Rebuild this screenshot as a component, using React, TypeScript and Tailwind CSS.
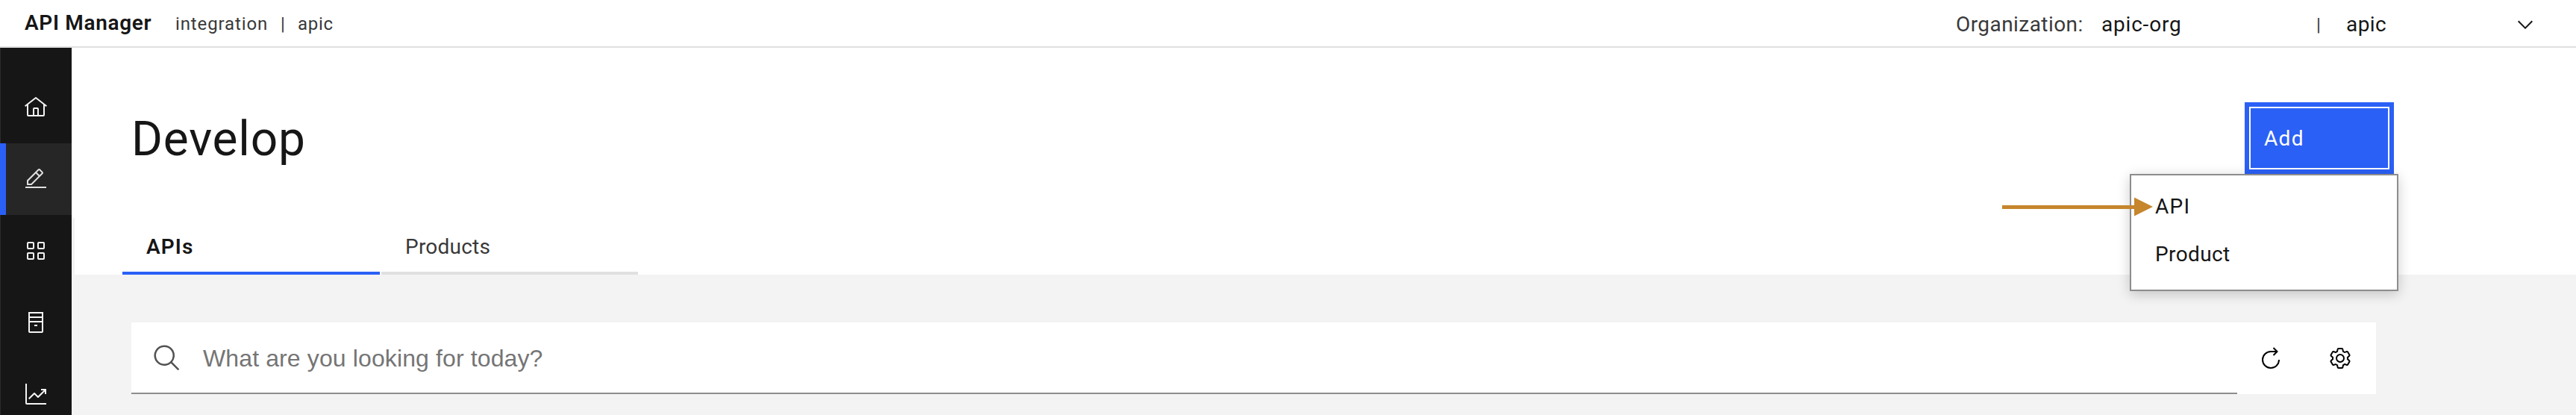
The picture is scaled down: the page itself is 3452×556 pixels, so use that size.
import React from "react";

type IconProps = { children: React.ReactNode; className?: string };

function Icon({ children, className = "size-8" }: IconProps) {
  return (
    <svg viewBox="0 0 32 32" fill="currentColor" className={`${className} shrink-0`} aria-hidden="true">
      {children}
    </svg>
  );
}

const HomeIcon = () => (
  <Icon>
    <path d="M16.612 2.214a1.01 1.01 0 0 0-1.243 0L1 13.419l1.243 1.572L4 13.621V26a2.004 2.004 0 0 0 2 2h20a2.004 2.004 0 0 0 2-2V13.63L29.757 15 31 13.428ZM18 26h-4v-8h4Zm2 0v-8a2.002 2.002 0 0 0-2-2h-4a2.002 2.002 0 0 0-2 2v8H6V12.062l10-7.79 10 7.8V26Z" />
  </Icon>
);

const EditIcon = () => (
  <Icon>
    <path d="M2 26h28v2H2zM25.4 9c.8-.8.8-2 0-2.800l-3.600-3.600c-.8-.8-2-.8-2.800 0l-15 15V24h6.400l15-15zM20.400 4 24 7.600l-3 3L17.400 7l3-3zM6 22v-3.600l10-10 3.600 3.600-10 10H6z" />
  </Icon>
);

const GridIcon = () => (
  <Icon>
    <path d="M12 4H6a2 2 0 0 0-2 2v6a2 2 0 0 0 2 2h6a2 2 0 0 0 2-2V6a2 2 0 0 0-2-2Zm0 8H6V6h6Z" />
    <path d="M26 4h-6a2 2 0 0 0-2 2v6a2 2 0 0 0 2 2h6a2 2 0 0 0 2-2V6a2 2 0 0 0-2-2Zm0 8h-6V6h6Z" />
    <path d="M12 18H6a2 2 0 0 0-2 2v6a2 2 0 0 0 2 2h6a2 2 0 0 0 2-2v-6a2 2 0 0 0-2-2Zm0 8H6v-6h6Z" />
    <path d="M26 18h-6a2 2 0 0 0-2 2v6a2 2 0 0 0 2 2h6a2 2 0 0 0 2-2v-6a2 2 0 0 0-2-2Zm0 8h-6v-6h6Z" />
  </Icon>
);

const CatalogIcon = () => (
  <Icon>
    <path d="M6 2v26a2 2 0 0 0 2 2h16a2 2 0 0 0 2-2V2Zm18 2v4H8V4Zm0 6v4H8v-4ZM8 28V16h16v12Z" />
    <path d="M14 19h4v2h-4z" />
  </Icon>
);

const AnalyticsIcon = () => (
  <Icon>
    <path d="M4 2H2v26a2 2 0 0 0 2 2h26v-2H4Z" />
    <path d="M30 9h-7v2h3.590L19 18.590l-4.290-4.300a1 1 0 0 0-1.420 0L6 21.590 7.410 23 14 16.410l4.290 4.300a1 1 0 0 0 1.420 0L28 12.410V16h2Z" />
  </Icon>
);

const SearchIcon = () => (
  <Icon className="size-10">
    <path d="m29 27.586-7.552-7.552a11.018 11.018 0 1 0-1.414 1.414L27.586 29ZM4 13a9 9 0 1 1 9 9 9.010 9.010 0 0 1-9-9Z" />
  </Icon>
);

const RestartIcon = () => (
  <Icon>
    <path d="M27 18A11 11 0 1 1 16 7h8M19.500 2l5 5-5 5" fill="none" stroke="currentColor" strokeWidth="2" />
  </Icon>
);

const SettingsIcon = () => (
  <Icon>
    <path d="M27 16.760v-1.530l1.920-1.680A2 2 0 0 0 29.300 11l-2.360-4a2 2 0 0 0-1.730-1 2 2 0 0 0-.640.100l-2.430.820a11.350 11.350 0 0 0-1.310-.750l-.510-2.520a2 2 0 0 0-2-1.610h-4.680a2 2 0 0 0-2 1.610l-.510 2.520a11.480 11.480 0 0 0-1.320.750l-2.380-.860A2 2 0 0 0 6.790 6a2 2 0 0 0-1.730 1L2.700 11a2 2 0 0 0 .410 2.510L5 15.240v1.530l-1.890 1.680A2 2 0 0 0 2.700 21l2.360 4a2 2 0 0 0 1.730 1 2 2 0 0 0 .640-.100l2.430-.820a11.350 11.350 0 0 0 1.310.750l.510 2.520a2 2 0 0 0 2 1.610h4.720a2 2 0 0 0 2-1.610l.510-2.520a11.480 11.480 0 0 0 1.320-.750l2.420.820a2 2 0 0 0 .640.100 2 2 0 0 0 1.730-1l2.280-4a2 2 0 0 0-.410-2.510ZM25.210 24l-3.430-1.160a8.860 8.860 0 0 1-2.710 1.570L18.360 28h-4.720l-.710-3.550a9.360 9.360 0 0 1-2.700-1.570L6.790 24l-2.360-4 2.720-2.400a8.900 8.900 0 0 1 0-3.130L4.430 12l2.360-4 3.430 1.160a8.860 8.860 0 0 1 2.710-1.570L13.640 4h4.720l.710 3.550a9.360 9.360 0 0 1 2.700 1.570L25.210 8l2.360 4-2.720 2.400a8.900 8.900 0 0 1 0 3.130L27.570 20Z" />
    <path d="M16 22a6 6 0 1 1 6-6 5.940 5.940 0 0 1-6 6Zm0-10a3.910 3.910 0 0 0-4 4 3.910 3.910 0 0 0 4 4 3.910 3.910 0 0 0 4-4 3.910 3.910 0 0 0-4-4Z" />
  </Icon>
);

const ChevronDownIcon = () => (
  <Icon>
    <path d="M16 22 6 12l1.400-1.400 8.600 8.600 8.600-8.600L26 12z" />
  </Icon>
);

function Header() {
  return (
    <header className="flex h-16 items-center border-b-2 border-[#e0e0e0] bg-white pl-[33px] pr-[52px] whitespace-nowrap">
      <div className="w-[202px] text-[28px] font-semibold tracking-[0.66px]">API Manager</div>
      <div className="flex items-center pt-px text-2xl text-[#393939]">
        <span className="w-[141px] tracking-[0.88px]">integration</span>
        <span className="w-[23px]">|</span>
        <span className="tracking-[0.71px]">apic</span>
      </div>
      <div className="ml-auto flex items-center pt-[3px] text-[28px]">
        <span className="w-[195px] tracking-[0.44px] text-[#393939]">Organization:</span>
        <span className="w-[288px] tracking-[0.8px]">apic-org</span>
        <span className="w-[40px] text-2xl text-[#393939]">|</span>
        <span className="w-[224px] tracking-[0.41px]">apic</span>
        <ChevronDownIcon />
      </div>
    </header>
  );
}

function SideNav() {
  const item = "flex h-24 shrink-0 items-center justify-center";
  return (
    <nav className="flex w-24 shrink-0 flex-col overflow-hidden bg-[#161616] pt-8 text-[#f4f4f4] shadow-[inset_1px_0_0_#2c2c2c]">
      <a className={item}><HomeIcon /></a>
      <a className={`${item} border-l-8 border-[#2b60f6] bg-[#262626] pr-2 text-[#e0e0e0]`}><EditIcon /></a>
      <a className={item}><GridIcon /></a>
      <a className={item}><CatalogIcon /></a>
      <a className={item}><AnalyticsIcon /></a>
    </nav>
  );
}

function AddMenu() {
  return (
    <div className="relative h-24 w-[200px] bg-[#2b60f6] p-1.5">
      <button className="flex h-full w-full items-center border-2 border-white pt-px pl-[18px] text-[28px] tracking-[1.3px] text-white">
        Add
      </button>
      <ul className="absolute top-24 -right-1.5 z-10 h-[157px] w-[360px] border-2 border-[#8d8d8d] bg-white pt-2.5 pl-8 text-[28px] shadow-[0_4px_16px_rgba(0,0,0,0.2)]">
        <li className="flex h-16 items-center tracking-[1.29px]">API</li>
        <li className="flex h-16 items-center tracking-[0.38px]">Product</li>
      </ul>
      <svg viewBox="0 0 202 26" className="absolute top-[127px] -left-[325px] z-20 h-[26px] w-[202px]" fill="#c6862d" aria-hidden="true">
        <path d="M0 11h177V.500L202 13l-25 12.500V16H0z" />
      </svg>
    </div>
  );
}

function Tabs() {
  return (
    <div className="flex h-[76px] gap-0.5 text-[28px]">
      <div className="flex w-[345px] items-center border-b-4 border-[#2b60f6] pt-[5px] pl-8 font-semibold tracking-[1.1px]">
        APIs
      </div>
      <div className="flex w-[344px] items-center border-b-4 border-[#e0e0e0] pt-[5px] pl-8 tracking-[0.23px] text-[#393939]">
        Products
      </div>
    </div>
  );
}

function SearchBar() {
  return (
    <div className="flex h-24 w-[3008px] bg-white">
      <div className="flex w-[2822px] items-center gap-7 border-b-2 border-[#8d8d8d] pt-0.5 pl-7 text-[#525252]">
        <SearchIcon />
        <span className="font-['Liberation_Sans',sans-serif] text-[32px] tracking-[0.12px] text-[#757575]">
          What are you looking for today?
        </span>
      </div>
      <div className="flex items-center gap-[61px] pl-[29px] text-black">
        <RestartIcon />
        <SettingsIcon />
      </div>
    </div>
  );
}

export default function App() {
  return (
    <div className="flex h-[556px] w-[3452px] flex-col overflow-hidden bg-white font-[Roboto,sans-serif] text-[#161616]">
      <Header />
      <div className="flex min-h-0 flex-1">
        <SideNav />
        <main className="flex flex-1 flex-col bg-[#f3f3f3]">
          <section className="h-[304px] bg-white">
            <div className="flex h-[228px] items-start justify-between pt-[73px] pr-[244px] pl-20">
              <h1 className="text-[64px] leading-[100px] tracking-[0.81px]">Develop</h1>
              <AddMenu />
            </div>
            <div className="border-l-4 border-[#f3f3f3] pl-16">
              <Tabs />
            </div>
          </section>
          <section className="px-20 pt-16">
            <SearchBar />
          </section>
        </main>
      </div>
    </div>
  );
}
